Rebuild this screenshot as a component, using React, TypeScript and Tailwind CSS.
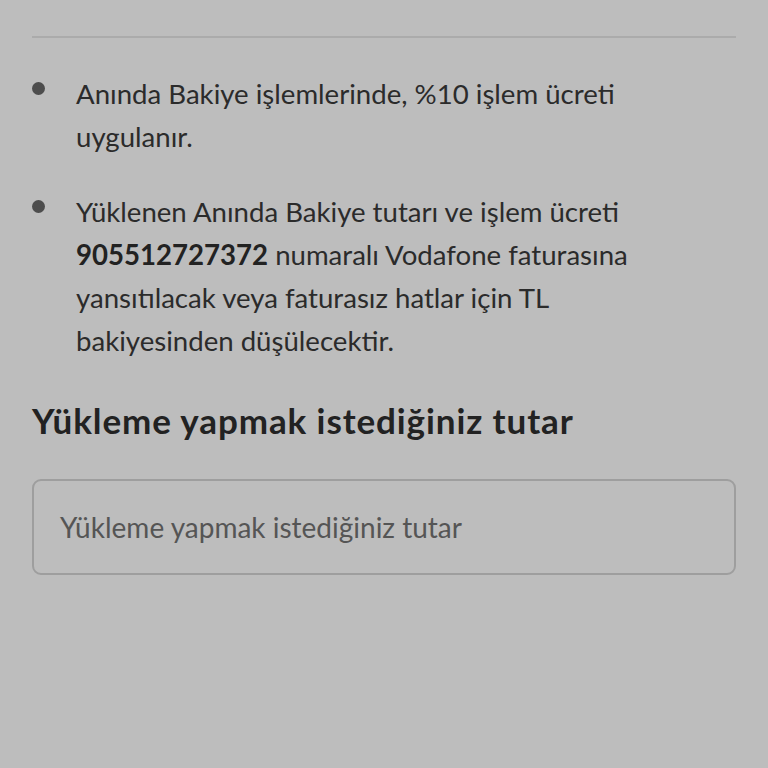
import React from "react";

export default function App() {
  return (
    <div
      className="w-[768px] h-[768px] bg-[#bdbdbd] px-8 overflow-hidden"
      style={{ fontFamily: "Lato, 'Noto Sans', sans-serif" }}
    >
      <div className="h-[38px] border-b-2 border-[#ababab]" />
      <ul className="mt-[34px] flex flex-col gap-[32px] text-[27.6px] leading-[43px] text-[#2b2b2b]">
        <li className="flex">
          <span className="mt-[10px] w-[13px] h-[13px] shrink-0 rounded-full bg-[#4d4d4d]" />
          <p className="ml-[31px] w-[600px]">
            Anında Bakiye işlemlerinde, %10 işlem ücreti uygulanır.
          </p>
        </li>
        <li className="flex">
          <span className="mt-[10px] w-[13px] h-[13px] shrink-0 rounded-full bg-[#4d4d4d]" />
          <p className="ml-[31px] w-[600px]">
            Yüklenen Anında Bakiye tutarı ve işlem ücreti{" "}
            <span className="font-bold text-[#222]">905512727372</span> numaralı
            Vodafone faturasına yansıtılacak veya faturasız hatlar için TL
            bakiyesinden düşülecektir.
          </p>
        </li>
      </ul>
      <h2 className="mt-[36px] text-[35px] leading-[44px] font-bold tracking-[0.9px] text-[#222]">
        Yükleme yapmak istediğiniz tutar
      </h2>
      <div className="mt-[37px] h-[96px] rounded-[9px] border-2 border-[#9e9e9e] flex items-center pl-[26px]">
        <span className="text-[28px] text-[#555]">Yükleme yapmak istediğiniz tutar</span>
      </div>
    </div>
  );
}
